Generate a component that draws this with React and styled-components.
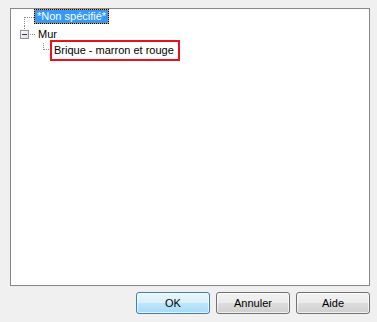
import React from 'react';
import styled, { createGlobalStyle } from 'styled-components';

const GlobalStyle = createGlobalStyle`
    html, body {
        margin: 0;
        padding: 0;
        background: #f0f0f0;
    }
    body {
        font-family: "Liberation Sans", Arial, sans-serif;
        font-size: 11px;
        color: #000;
    }
`;

const Dialog = styled.div`
    display: flex;
    flex-direction: column;
    width: 377px;
    height: 322px;
    box-sizing: border-box;
    padding: 8px 7px 0 10px;
    gap: 6px;
`;

const TreePanel = styled.div`
    width: 360px;
    height: 278px;
    box-sizing: border-box;
    border: 1px solid #828790;
    background: #fff;
    display: flex;
    flex-direction: column;
`;

const Row = styled.div`
    display: flex;
    align-items: center;
    height: 17px;
`;

const Lines = styled.svg`
    flex: none;
    display: block;
`;

const Label = styled.span`
    height: 15px;
    line-height: 13px;
    padding: 0 2px;
    box-sizing: border-box;
    border: 1px solid transparent;
    white-space: nowrap;
    align-self: ${p => (p.$selected ? 'flex-start' : 'center')};
    ${p => p.$selected && `
        background: #3399ff;
        color: #fff;
        border-color: #f0a030;
        outline: 1px dotted #000;
        outline-offset: -1px;
    `}
`;

const EditBox = styled.div`
    width: 130px;
    height: 21px;
    margin-top: -2px;
    box-sizing: border-box;
    border: 2px solid #e8141b;
    background: #fff;
    padding: 0 2px;
    line-height: 17px;
    white-space: nowrap;
`;

const ButtonBar = styled.div`
    display: flex;
    justify-content: flex-end;
    gap: 6px;
`;

const Button = styled.button`
    width: 74px;
    height: 22px;
    box-sizing: border-box;
    border: 1px solid ${p => (p.$default ? '#3c7fb1' : '#707070')};
    border-radius: 3px;
    font: inherit;
    color: #000;
    padding: 0;
    background: ${p => p.$default
        ? 'linear-gradient(#eaf6fd 0%, #d9f0fc 50%, #bee6fd 50%, #a7d9f5 100%)'
        : 'linear-gradient(#f2f2f2 0%, #ebebeb 50%, #dddddd 50%, #cfcfcf 100%)'};
    box-shadow: inset 0 0 0 1px rgba(255, 255, 255, 0.7);
`;

const dots = { stroke: '#8a8a8a', strokeWidth: 1, strokeDasharray: '1 1', shapeRendering: 'crispEdges' };

function FirstLines() {
    return (
        <Lines width="23" height="17">
            <line x1="13.5" y1="8" x2="13.5" y2="17" style={dots} />
            <line x1="14" y1="8.5" x2="23" y2="8.5" style={dots} />
        </Lines>
    );
}

function ExpanderLines() {
    return (
        <Lines width="24" height="17">
            <line x1="13.5" y1="0" x2="13.5" y2="4" style={dots} />
            <defs>
                <linearGradient id="boxFill" x1="0" y1="0" x2="1" y2="1">
                    <stop offset="0" stopColor="#ffffff" />
                    <stop offset="1" stopColor="#dcdcdc" />
                </linearGradient>
            </defs>
            <rect x="9.5" y="4.5" width="8" height="8" fill="url(#boxFill)" stroke="#919191" shapeRendering="crispEdges" />
            <line x1="11" y1="8.5" x2="16" y2="8.5" stroke="#1c3a5e" shapeRendering="crispEdges" />
            <line x1="19" y1="8.5" x2="24" y2="8.5" style={dots} />
        </Lines>
    );
}

function ChildLines() {
    return (
        <Lines width="39" height="17">
            <line x1="32.5" y1="0" x2="32.5" y2="7" style={dots} />
            <line x1="33" y1="6.5" x2="39" y2="6.5" style={dots} />
        </Lines>
    );
}

export default function App() {
    return (
        <>
            <GlobalStyle />
            <Dialog>
                <TreePanel>
                    <Row>
                        <FirstLines />
                        <Label $selected>*Non spécifié*</Label>
                    </Row>
                    <Row>
                        <ExpanderLines />
                        <Label>Mur</Label>
                    </Row>
                    <Row>
                        <ChildLines />
                        <EditBox>Brique - marron et rouge</EditBox>
                    </Row>
                </TreePanel>
                <ButtonBar>
                    <Button $default>OK</Button>
                    <Button>Annuler</Button>
                    <Button>Aide</Button>
                </ButtonBar>
            </Dialog>
        </>
    );
}
